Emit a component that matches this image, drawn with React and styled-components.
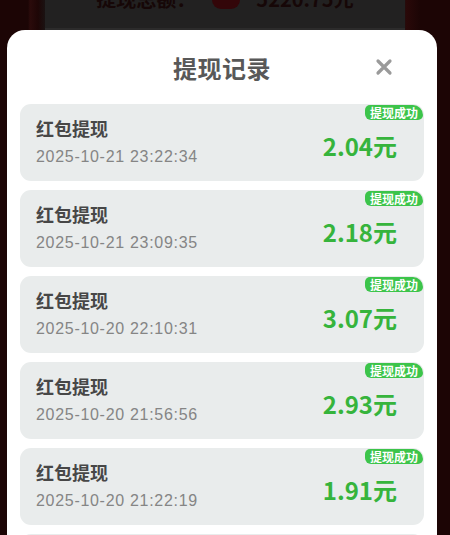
import React from "react";
import styled, { createGlobalStyle } from "styled-components";

const GlobalStyle = createGlobalStyle`
  html, body {
    margin: 0;
    padding: 0;
    height: 100%;
    overflow: hidden;
    background: #1a0606;
    font-family: "Noto Sans CJK SC", "Noto Sans", sans-serif;
  }
`;

const Page = styled.div`
  width: 450px;
  height: 535px;
  overflow: hidden;
  background: linear-gradient(
    90deg,
    #1c0505 0px,
    #1c0505 28px,
    #2b0b0b 30px,
    #1e0606 38px,
    #1a1414 46px,
    #1a1414 404px,
    #2a0909 406px,
    #1c0505 420px,
    #1c0505 450px
  );
`;

const TopStrip = styled.div`
  height: 30px;
  margin: 0 45px;
  box-sizing: border-box;
  background: #222121;
  border-bottom: 2px solid #2c2b2b;
  display: flex;
  align-items: flex-start;
  justify-content: center;
  gap: 16px;
  overflow: hidden;
`;

const TopText = styled.span`
  margin-top: -16px;
  font-size: 20px;
  font-weight: 700;
  color: #160707;
`;

const TopCoin = styled.span`
  margin-top: -12px;
  width: 28px;
  height: 21px;
  border-radius: 9px;
  background: #330609;
`;

const Modal = styled.div`
  margin: 0 13px 0 7px;
  background: #ffffff;
  border-radius: 18px 18px 0 0;
  padding: 0 13px 20px 13px;
`;

const Header = styled.div`
  position: relative;
  height: 74px;
  display: flex;
  align-items: center;
  justify-content: center;
`;

const Title = styled.h2`
  margin: 0;
  font-size: 24px;
  font-weight: 700;
  color: #585858;
  letter-spacing: 0.5px;
`;

const Close = styled.button`
  position: absolute;
  right: 30px;
  top: 27px;
  width: 20px;
  height: 20px;
  padding: 0;
  border: none;
  background: transparent;
  color: #9a9a9a;
  cursor: pointer;
`;

const List = styled.div`
  display: flex;
  flex-direction: column;
  gap: 9px;
`;

const Card = styled.div`
  position: relative;
  height: 77px;
  border-radius: 11px;
  background: #e9ecec;
  display: flex;
  align-items: center;
  justify-content: space-between;
  padding: 0 27px 0 16px;
`;

const Info = styled.div`
  display: flex;
  flex-direction: column;
  gap: 7px;
  padding-bottom: 2px;
`;

const Name = styled.div`
  font-size: 18px;
  font-weight: 700;
  color: #474747;
  line-height: 24px;
`;

const Time = styled.div`
  font-family: "Liberation Sans", "Noto Sans", sans-serif;
  font-size: 16px;
  letter-spacing: 0.7px;
  color: #858585;
  line-height: 20px;
`;

const Amount = styled.div`
  font-size: 24px;
  font-weight: 700;
  color: #36b43c;
  padding-top: 5px;
`;

const Badge = styled.span`
  position: absolute;
  top: 1px;
  right: 1px;
  height: 15px;
  padding: 0 5px;
  border-radius: 5px 10px 5px 6px;
  background: #3cc44a;
  color: #ffffff;
  font-size: 12px;
  font-weight: 700;
  line-height: 15px;
`;

const records = [
  { time: "2025-10-21 23:22:34", amount: "2.04" },
  { time: "2025-10-21 23:09:35", amount: "2.18" },
  { time: "2025-10-20 22:10:31", amount: "3.07" },
  { time: "2025-10-20 21:56:56", amount: "2.93" },
  { time: "2025-10-20 21:22:19", amount: "1.91" },
  { time: "2025-10-20 21:05:42", amount: "2.36" },
];

export default function App() {
  return (
    <Page>
      <GlobalStyle />
      <TopStrip>
        <TopText>提现总额：</TopText>
        <TopCoin />
        <TopText>5220.75元</TopText>
      </TopStrip>
      <Modal>
        <Header>
          <Title>提现记录</Title>
          <Close aria-label="关闭">
            <svg width="20" height="20" viewBox="0 0 20 20">
              <path
                d="M4 4 L16 16 M16 4 L4 16"
                stroke="currentColor"
                strokeWidth="3.2"
                strokeLinecap="round"
              />
            </svg>
          </Close>
        </Header>
        <List>
          {records.map((r) => (
            <Card key={r.time}>
              <Info>
                <Name>红包提现</Name>
                <Time>{r.time}</Time>
              </Info>
              <Amount>{r.amount}元</Amount>
              <Badge>提现成功</Badge>
            </Card>
          ))}
        </List>
      </Modal>
    </Page>
  );
}
